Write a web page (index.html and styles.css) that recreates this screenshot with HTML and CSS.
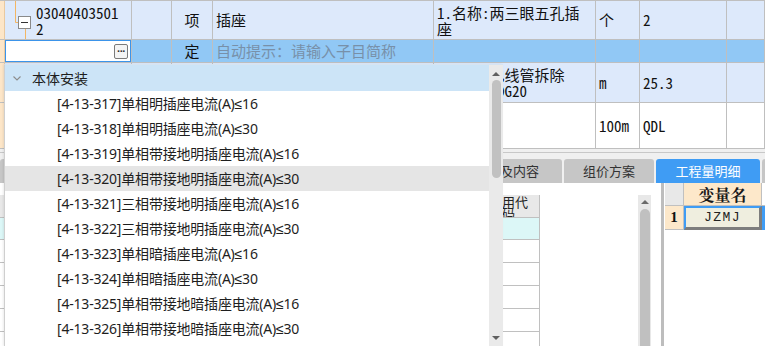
FILE: index.html
```html
<!DOCTYPE html>
<html lang="zh-CN">
<head>
<meta charset="utf-8">
<title>工程量清单</title>
<link rel="stylesheet" href="styles.css">
</head>
<body>
<div class="app">
  <div class="grid">
    <!-- row 1 -->
    <div class="c c0 rb"></div>
    <div class="c c1 rb tree">
      <svg class="treeline" width="31" height="39" viewBox="0 0 31 39">
        <path d="M10.5 0 V21.5 H13" stroke="#f3b664" stroke-width="1" fill="none"/>
        <path d="M20.5 28 V39" stroke="#f3b664" stroke-width="1" fill="none"/>
        <rect x="13.5" y="15.5" width="12" height="12" fill="#fff" stroke="#8a8a8a"/>
        <path d="M16 21.5 H23" stroke="#333" stroke-width="1"/>
      </svg>
      <span class="code">03040403501<br>2</span>
    </div>
    <div class="c rb"></div>
    <div class="c rb ctr">项</div>
    <div class="c rb">插座</div>
    <div class="c rb top">1.名称:两三眼五孔插<br>座</div>
    <div class="c rb">个</div>
    <div class="c rb">2</div>
    <div class="c rb"></div>
    <!-- row 2 (editing) -->
    <div class="c c0 re"></div>
    <div class="c re editcell">
      <div class="input"><span class="dots">···</span></div>
    </div>
    <div class="c re"></div>
    <div class="c re ctr">定</div>
    <div class="c re hint">自动提示：请输入子目简称</div>
    <div class="c re"></div>
    <div class="c re"></div>
    <div class="c re"></div>
    <div class="c re"></div>
    <!-- row 3 -->
    <div class="c c0 rb"></div>
    <div class="c rb">030411001001</div>
    <div class="c rb"></div>
    <div class="c rb ctr">项</div>
    <div class="c rb">电线管拆除</div>
    <div class="c rb top">1.名称:电线管拆除<br>2.规格: DG20</div>
    <div class="c rb">m</div>
    <div class="c rb">25.3</div>
    <div class="c rb"></div>
    <!-- row 4 -->
    <div class="c c0 rw"></div>
    <div class="c rw"></div>
    <div class="c rw"></div>
    <div class="c rw"></div>
    <div class="c rw"></div>
    <div class="c rw"></div>
    <div class="c rw">100m</div>
    <div class="c rw">QDL</div>
    <div class="c rw"></div>
  </div>

  <div class="split"><div class="split-line"></div></div>

  <div class="tabbar">
    <div class="tab w-first">工料机显示</div>
    <div class="tab w90">单价构成</div>
    <div class="tab w111">特征及内容</div>
    <div class="tab w90">组价方案</div>
    <div class="tab active w104">工程量明细</div>
    <div class="tab w90"></div>
  </div>

  <div class="lower">
    <div class="leftpanel">
      <div class="toolstrip"></div>
      <div class="leftbody">
        <div class="feetable">
          <div class="fr fhead">
            <div class="fc f1">序号</div>
            <div class="fc f2">费用代号</div>
            <div class="fc f3">名称</div>
            <div class="fc f4">计算基数</div>
            <div class="fc f5">费率(%)</div>
            <div class="fc f6">金额</div>
            <div class="fc f7">费用代码</div>
          </div>
          <div class="fr fsel">
            <div class="fc f1"></div><div class="fc f2"></div><div class="fc f3"></div><div class="fc f4"></div><div class="fc f5"></div><div class="fc f6"></div><div class="fc f7"></div>
          </div>
          <div class="fr">
            <div class="fc f1"></div><div class="fc f2"></div><div class="fc f3"></div><div class="fc f4"></div><div class="fc f5"></div><div class="fc f6"></div><div class="fc f7"></div>
          </div>
          <div class="fr">
            <div class="fc f1"></div><div class="fc f2"></div><div class="fc f3"></div><div class="fc f4"></div><div class="fc f5"></div><div class="fc f6"></div><div class="fc f7"></div>
          </div>
          <div class="fr">
            <div class="fc f1"></div><div class="fc f2"></div><div class="fc f3"></div><div class="fc f4"></div><div class="fc f5"></div><div class="fc f6"></div><div class="fc f7"></div>
          </div>
          <div class="fr">
            <div class="fc f1"></div><div class="fc f2"></div><div class="fc f3"></div><div class="fc f4"></div><div class="fc f5"></div><div class="fc f6"></div><div class="fc f7"></div>
          </div>
          <div class="fr">
            <div class="fc f1"></div><div class="fc f2"></div><div class="fc f3"></div><div class="fc f4"></div><div class="fc f5"></div><div class="fc f6"></div><div class="fc f7"></div>
          </div>
        </div>
        <div class="spacer"></div>
        <div class="vscroll">
          <div class="arrow-up"></div>
          <div class="thumb"></div>
        </div>
      </div>
    </div>
    <div class="rightpanel">
      <div class="vtable">
        <div class="vc corner"></div>
        <div class="vc vhead">变量名</div>
        <div class="vc vhead-x"></div>
        <div class="vc rownum">1</div>
        <div class="vc vsel">JZMJ</div>
        <div class="vc vblue"></div>
      </div>
    </div>
  </div>
</div>

<div class="dropdown">
  <div class="ddlist">
    <div class="ddhead">
      <svg class="chev" width="8" height="5" viewBox="0 0 8 5"><path d="M0.5 0.5 L4 4 L7.5 0.5" stroke="#8c8c8c" stroke-width="1.1" fill="none"/></svg>
      <span>本体安装</span>
    </div>
    <div class="dditem">[4-13-317]单相明插座电流(A)≤16</div>
    <div class="dditem">[4-13-318]单相明插座电流(A)≤30</div>
    <div class="dditem">[4-13-319]单相带接地明插座电流(A)≤16</div>
    <div class="dditem hover">[4-13-320]单相带接地明插座电流(A)≤30</div>
    <div class="dditem">[4-13-321]三相带接地明插座电流(A)≤16</div>
    <div class="dditem">[4-13-322]三相带接地明插座电流(A)≤30</div>
    <div class="dditem">[4-13-323]单相暗插座电流(A)≤16</div>
    <div class="dditem">[4-13-324]单相暗插座电流(A)≤30</div>
    <div class="dditem">[4-13-325]单相带接地暗插座电流(A)≤16</div>
    <div class="dditem">[4-13-326]单相带接地暗插座电流(A)≤30</div>
  </div>
  <div class="ddscroll">
    <div class="sb-up"></div>
    <div class="sb-thumb"></div>
    <div class="sb-fill"></div>
    <div class="sb-down"></div>
  </div>
</div>
</body>
</html>
```

FILE: styles.css
```css
* { box-sizing: border-box; margin: 0; padding: 0; }
html, body { width: 765px; height: 346px; overflow: hidden; }
body {
  background: #fff;
  font-family: "Noto Sans CJK SC", sans-serif;
  color: #111;
  position: relative;
}
.app { width: 765px; height: 346px; display: flex; flex-direction: column; overflow: hidden; }

/* ---------- top grid ---------- */
.grid {
  display: grid;
  grid-template-columns: 5px 127px 40px 41px 221px 162px 44px 87px 38px;
  grid-template-rows: 39px 23px 40px 46px;
  border-top: 1px solid #bfbfbf;
  font-family: "Noto Sans Mono CJK SC", "Liberation Mono", "Noto Sans CJK SC", monospace;
  font-size: 15px;
  line-height: 16px;
  color: #111;
  flex: none;
}
.c {
  border-right: 1px solid #bfbfbf;
  border-bottom: 1px solid #bfbfbf;
  padding-left: 3px;
  display: flex;
  align-items: center;
  overflow: hidden;
  white-space: nowrap;
}
.rb { background: #dde9fb; }
.re { background: #91c8f5; }
.rw { background: #fff; }
.c0 { background: #fde6c8; padding: 0; border-right-color: #e9c9a0; }
.ctr { justify-content: center; padding-left: 0; }
.top { align-items: flex-start; padding-top: 4px; }
.tree { padding: 0; align-items: flex-start; }
.treeline { flex: none; display: block; }
.code { padding-top: 4px; }
.hint { color: #7890a9; font-family: "Noto Sans CJK SC", sans-serif; font-size: 15px; }

.editcell { padding: 0; align-items: stretch; }
.input {
  flex: 1;
  background: #fff;
  border: 1px solid #3b94ea;
  display: flex;
  align-items: center;
  justify-content: flex-end;
  padding-right: 2px;
}
.dots {
  width: 14px;
  height: 15px;
  border: 1px solid #7a7a7a;
  border-radius: 2px;
  background: #f4f4f4;
  font-family: "Liberation Sans", sans-serif;
  font-size: 11px;
  line-height: 11px;
  font-weight: 700;
  color: #333;
  display: flex;
  align-items: center;
  justify-content: center;
  letter-spacing: -1px;
}

/* ---------- splitter ---------- */
.split { height: 9px; background: #f0f0f0; flex: none; padding-top: 3px; }
.split-line { height: 1px; background: #c8c8c8; }

/* ---------- tabs ---------- */
.tabbar {
  height: 25px;
  flex: none;
  background: #f0f0f0;
  display: flex;
  align-items: flex-end;
  gap: 2px;
  padding-top: 1px;
  overflow: hidden;
}
.tab {
  height: 24px;
  flex: none;
  background: #c6c6c6;
  border-radius: 3px 3px 0 0;
  color: #333;
  font-size: 13px;
  line-height: 24px;
  text-align: center;
}
.tab.active { background: #3f9cf4; color: #fff; }
.w-first { width: 357px; }
.w90 { width: 90px; }
.w104 { width: 104px; }
.w111 { width: 111px; }

/* ---------- lower ---------- */
.lower { flex: 1; display: flex; min-height: 0; }
.leftpanel { width: 661px; flex: none; display: flex; flex-direction: column; background: #fff; }
.toolstrip { height: 12px; flex: none; }
.leftbody { flex: 1; display: flex; min-height: 0; padding-right: 10px; }
.feetable { width: 540px; flex: none; font-size: 13px; line-height: 14px; color: #222; }
.fr { display: flex; height: 23px; }
.fr.fhead { background: #e8e8e8; }
.fr.fsel { background: #dcf7f7; height: 22px; }
.fc {
  border-right: 1px solid #c0c0c0;
  border-bottom: 1px solid #c0c0c0;
  flex: none;
  display: flex;
  align-items: center;
  justify-content: center;
  text-align: center;
  overflow: hidden;
  padding: 0 4px;
}
.f1 { width: 40px; }
.f2 { width: 70px; }
.f3 { width: 120px; }
.f4 { width: 100px; }
.f5 { width: 60px; }
.f6 { width: 88px; }
.fhead .f7 { font-size: 13px; line-height: 11px; white-space: normal; align-items: flex-start; padding-top: 1px; }
.f7 { width: 62px; padding: 0 6px; }
.spacer { flex: 1; }
.vscroll {
  width: 13px;
  flex: none;
  background: #e8e8e8;
  display: flex;
  flex-direction: column;
  align-items: center;
}
.arrow-up {
  margin-top: 5px;
  width: 0; height: 0;
  border-left: 4px solid transparent;
  border-right: 4px solid transparent;
  border-bottom: 4px solid #6a6a6a;
}
.thumb {
  margin-top: 5px;
  width: 10px;
  flex: 1;
  background: #c0c0c0;
  border-radius: 5px 5px 0 0;
}

.rightpanel {
  flex: 1;
  border-left: 3px solid #bdbdbd;
  background: #fff;
  padding-left: 1px;
}
.vtable {
  display: grid;
  grid-template-columns: 19px 78px 1fr;
  grid-template-rows: 23px 24px;
}
.vc { border-right: 1px solid #c0c0c0; border-bottom: 1px solid #c0c0c0; display: flex; align-items: center; justify-content: center; }
.corner { background: #e8e8e8; }
.vhead {
  background: #fde8ca;
  font-family: "Noto Serif CJK SC", "Noto Sans CJK SC", serif;
  font-weight: 700;
  font-size: 16px;
  color: #1a1a1a;
}
.vhead-x { background: #fff; border-right: none; }
.rownum {
  background: #fde8ca;
  font-family: "Liberation Serif", serif;
  font-weight: 700;
  font-size: 15px;
  color: #111;
}
.vsel {
  background: #efeedf;
  border-top: 2px solid #3f9cf4;
  border-left: 2px solid #3f9cf4;
  border-right: 3px solid #7d7d7d;
  border-bottom: 3px solid #7d7d7d;
  font-family: "Liberation Mono", monospace;
  font-size: 13px;
  letter-spacing: 1.5px;
  color: #222;
}
.vblue { background: #3f9cf4; border: none; }

/* ---------- dropdown overlay ---------- */
.dropdown {
  position: absolute;
  left: 4px;
  top: 64px;
  width: 499px;
  height: 282px;
  background: #fff;
  border-left: 1px solid #cfcfcf;
  border-top: 1px solid #d6e4f2;
  display: flex;
  box-shadow: -1px 0 2px rgba(0,0,0,0.08);
}
.ddlist {
  flex: 1;
  overflow: hidden;
  font-family: "Noto Sans", "Liberation Sans", "Noto Sans CJK SC", sans-serif;
  font-size: 14px;
  color: #1e1e1e;
}
.ddhead {
  height: 26px;
  background: #cce4f7;
  display: flex;
  align-items: center;
  padding-left: 8px;
}
.chev { margin-right: 11px; display: block; }
.dditem {
  height: 25px;
  line-height: 25px;
  padding-left: 52px;
  white-space: nowrap;
  letter-spacing: -0.2px;
}
.dditem.hover { background: #e5e5e5; }
.ddscroll {
  width: 14px;
  flex: none;
  background: #eaeaea;
  display: flex;
  flex-direction: column;
  align-items: center;
}
.sb-up {
  margin-top: 7px;
  width: 0; height: 0;
  border-left: 4px solid transparent;
  border-right: 4px solid transparent;
  border-bottom: 4px solid #606060;
}
.sb-thumb {
  margin-top: 4px;
  width: 9px;
  height: 98px;
  background: #c1c1c1;
  border-radius: 5px;
}
.sb-fill { flex: 1; }
.sb-down {
  margin-bottom: 6px;
  width: 0; height: 0;
  border-left: 4px solid transparent;
  border-right: 4px solid transparent;
  border-top: 4px solid #606060;
}
```
